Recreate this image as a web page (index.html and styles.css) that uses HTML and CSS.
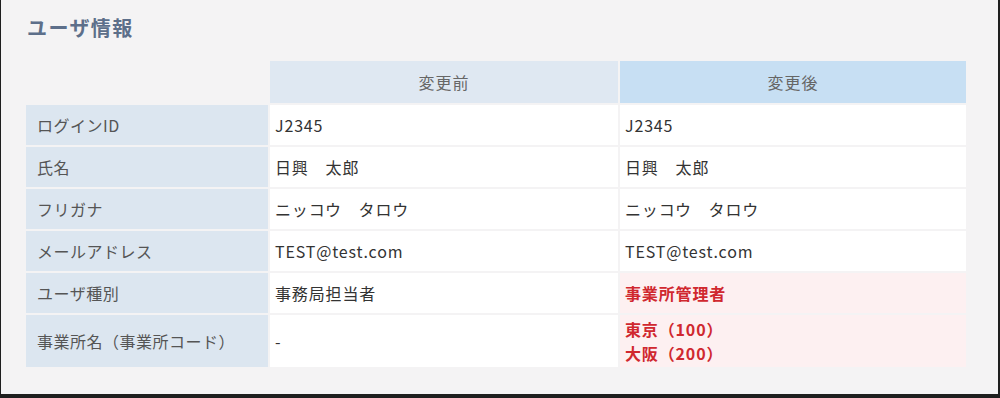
FILE: index.html
```html
<!DOCTYPE html>
<html lang="ja">
<head>
<meta charset="utf-8">
<link rel="stylesheet" href="styles.css">
</head>
<body>
<div class="frame">
  <h2 class="title">ユーザ情報</h2>
  <table class="diff">
    <thead>
      <tr>
        <th class="corner"></th>
        <th class="head-before">変更前</th>
        <th class="head-after">変更後</th>
      </tr>
    </thead>
    <tbody>
      <tr>
        <th class="label">ログインID</th>
        <td class="val">J2345</td>
        <td class="val">J2345</td>
      </tr>
      <tr>
        <th class="label">氏名</th>
        <td class="val">日興　太郎</td>
        <td class="val">日興　太郎</td>
      </tr>
      <tr>
        <th class="label">フリガナ</th>
        <td class="val">ニッコウ　タロウ</td>
        <td class="val">ニッコウ　タロウ</td>
      </tr>
      <tr>
        <th class="label">メールアドレス</th>
        <td class="val">TEST@test.com</td>
        <td class="val">TEST@test.com</td>
      </tr>
      <tr>
        <th class="label">ユーザ種別</th>
        <td class="val">事務局担当者</td>
        <td class="val changed">事業所管理者</td>
      </tr>
      <tr>
        <th class="label">事業所名（事業所コード）</th>
        <td class="val">-</td>
        <td class="val changed multi">東京（100）<br>大阪（200）</td>
      </tr>
    </tbody>
  </table>
</div>
</body>
</html>
```

FILE: styles.css
```css
html, body {
  margin: 0;
  padding: 0;
  background: #f4f3f4;
}
body {
  font-family: "Noto Sans CJK JP", "Noto Sans", sans-serif;
  color: #333;
}
.frame {
  box-sizing: border-box;
  width: 1000px;
  height: 398px;
  border-left: 1px solid #1e1e1e;
  border-right: 2px solid #1e1e1e;
  border-bottom: 4px solid #1e1e1e;
  background: #f4f3f4;
  padding: 14px 0 0 23px;
}
.title {
  margin: 0 0 17px 3px;
  font-size: 20px;
  line-height: 28px;
  font-weight: 700;
  color: #5d6f8a;
  letter-spacing: 1.4px;
}
.diff {
  border-collapse: separate;
  border-spacing: 2px;
  font-size: 16px;
  line-height: 24px;
}
.diff th, .diff td {
  padding: 8px 10px;
  box-sizing: border-box;
}
.diff .corner {
  width: 242px;
  background: transparent;
}
.diff .head-before, .diff .head-after {
  font-weight: 400;
  color: #666;
  text-align: center;
  padding: 9px 10px;
  letter-spacing: 1px;
}
.diff .head-before {
  width: 348px;
  background: #dfe8f2;
}
.diff .head-after {
  width: 346px;
  background: #c7dff3;
}
.diff .label {
  background: #dce6f0;
  text-align: left;
  font-weight: 400;
  color: #555;
  padding-left: 11px;
  letter-spacing: 0.5px;
}
.diff .val {
  background: #fff;
  color: #333;
  padding-left: 5px;
  letter-spacing: 0.85px;
}
.diff .changed {
  background: #fdf0f1;
  color: #d0282f;
  font-weight: 700;
}
.diff .multi {
  padding-top: 2px;
  padding-bottom: 2px;
}
```
